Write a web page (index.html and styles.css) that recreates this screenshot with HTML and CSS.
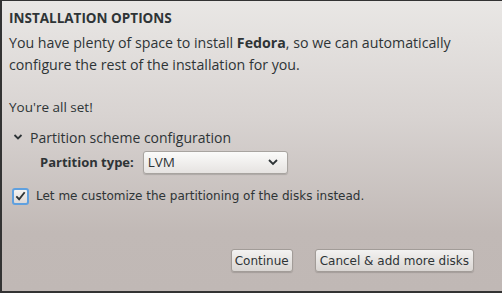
FILE: index.html
```html
<!DOCTYPE html>
<html lang="en">
<head>
<meta charset="UTF-8">
<title>Installation Options</title>
<link rel="stylesheet" href="styles.css">
</head>
<body>
<div class="dialog">
    <h1 class="title">INSTALLATION OPTIONS</h1>
    <p class="intro">You have plenty of space to install <b>Fedora</b>, so we can automatically<br>configure the rest of the installation for you.</p>
    <p class="status">You're all set!</p>

    <div class="expander">
        <svg class="arrow" width="10" height="8" viewBox="0 0 10 8"><path d="M1.5 2 L5 5.5 L8.5 2" fill="none" stroke="#2e3436" stroke-width="1.8"/></svg>
        <span>Partition scheme configuration</span>
    </div>

    <div class="ptype">
        <span class="ptype-label">Partition type:</span>
        <div class="combo">
            <span>LVM</span>
            <svg width="12" height="8" viewBox="0 0 12 8"><path d="M2 2 L6 6 L10 2" fill="none" stroke="#2e3436" stroke-width="1.8"/></svg>
        </div>
    </div>

    <label class="check">
        <span class="box"><svg width="14" height="14" viewBox="0 0 14 14"><path d="M2.5 7.5 L5.5 10.5 L11.5 3" fill="none" stroke="#2e3436" stroke-width="2"/></svg></span>
        <span>Let me customize the partitioning of the disks instead.</span>
    </label>

    <div class="buttons">
        <button class="btn">Continue</button>
        <button class="btn btn-wide">Cancel &amp; add more disks</button>
    </div>
</div>
</body>
</html>
```
FILE: styles.css
```css
body {
    margin: 0;
    width: 502px;
    height: 293px;
    overflow: hidden;
    background: #333333;
}

.dialog {
    box-sizing: border-box;
    width: 500px;
    height: 290px;
    margin-top: 1px;
    margin-left: 2px;
    padding: 6px 0 0 7px;
    background: linear-gradient(to bottom, #e9e7e5 0%, #d8d3d1 40%, #c1b9b6 80%, #c0b8b5 100%);
    font-family: "Open Sans", sans-serif;
    font-size: 13.5px;
    color: #2e3436;
    display: flex;
    flex-direction: column;
}

.title {
    margin: 0;
    font-size: 13.5px;
    font-weight: bold;
    height: 22px;
    line-height: 22px;
}

.intro {
    margin: 3px 0 0;
    font-size: 14.2px;
    line-height: 22px;
    white-space: nowrap;
}

.status {
    margin: 20px 0 0;
    line-height: 22px;
}

.expander {
    display: flex;
    align-items: center;
    margin: 8px 0 0 4px;
    height: 22px;
    font-size: 14px;
}

.arrow {
    margin-right: 7px;
}

.ptype {
    display: flex;
    align-items: center;
    margin: 2px 0 0 31px;
    height: 24px;
}

.ptype-label {
    font-weight: bold;
    font-size: 13px;
    margin-right: 9px;
}

.combo {
    box-sizing: border-box;
    width: 145px;
    height: 23px;
    padding: 0 8px 0 4px;
    border: 1px solid #a8a4a0;
    border-radius: 3px;
    background: linear-gradient(to bottom, #fbfbfa, #e6e3e1);
    box-shadow: 0 1px 1px rgba(0, 0, 0, 0.15);
    display: flex;
    align-items: center;
    justify-content: space-between;
}

.check {
    display: flex;
    align-items: center;
    margin: 12px 0 0 3px;
    font-family: "DejaVu Sans", sans-serif;
    font-size: 12px;
    height: 20px;
}

.box {
    box-sizing: border-box;
    width: 17px;
    height: 17px;
    border: 2px solid #5fa0df;
    border-radius: 3px;
    background: linear-gradient(to bottom, #f4f3f2, #dcd8d6);
    display: flex;
    align-items: center;
    justify-content: center;
    margin-right: 7px;
}

.buttons {
    display: flex;
    justify-content: flex-end;
    gap: 22px;
    margin-top: 43px;
    padding-right: 28px;
}

.btn {
    height: 23px;
    padding: 0 3px;
    border: 1px solid #a29c98;
    border-radius: 3px;
    background: linear-gradient(to bottom, #f3f2f1, #dad6d3);
    box-shadow: 0 1px 1px rgba(0, 0, 0, 0.15);
    font-family: "DejaVu Sans", sans-serif;
    font-size: 12px;
    color: #2e3436;
}

.btn-wide {
    padding: 0 4px;
}
```
